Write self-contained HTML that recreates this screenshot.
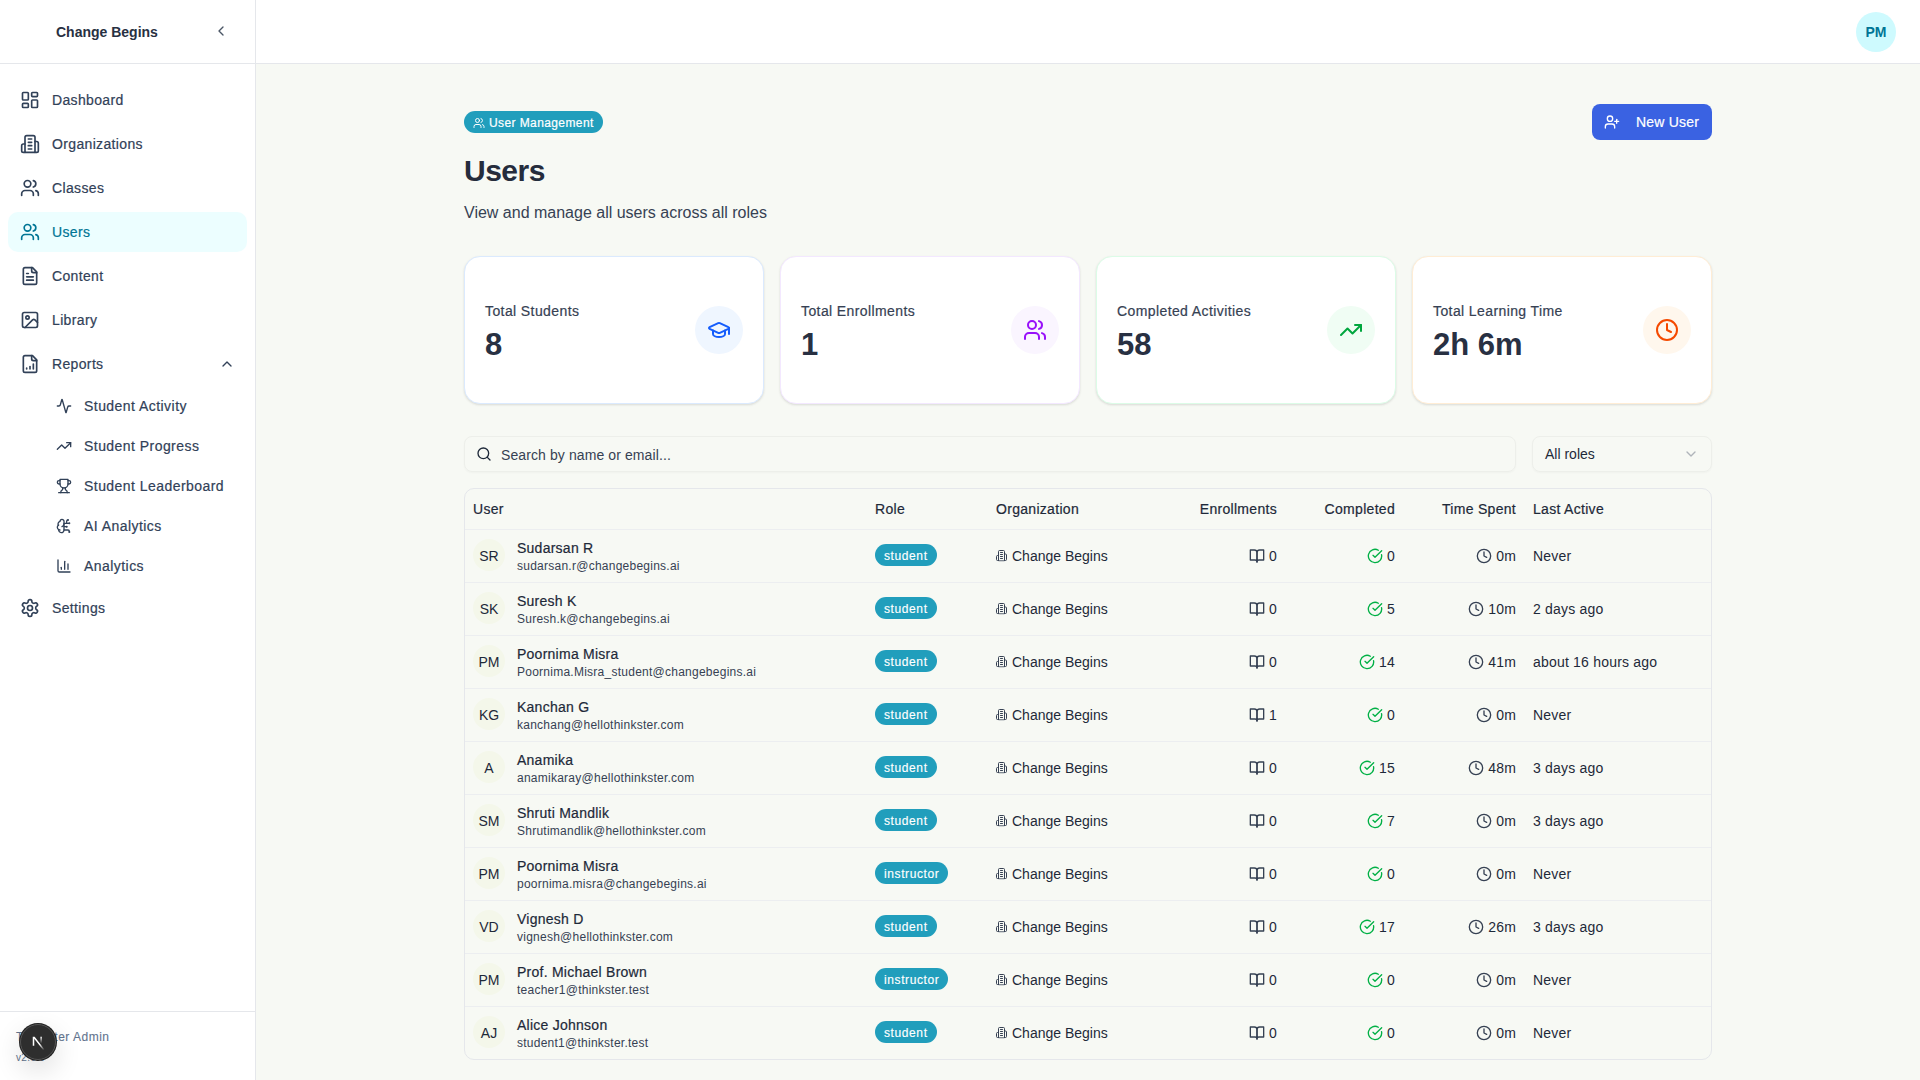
<!DOCTYPE html>
<html><head><meta charset="utf-8"><title>Users</title>
<style>
*{box-sizing:border-box;margin:0;padding:0}
html,body{width:1920px;height:1080px;overflow:hidden}
body{font-family:"Liberation Sans",sans-serif;background:#f7f9f4;color:#1e2939;position:relative}
.abs{position:absolute}
svg{display:block}
#sb{position:absolute;left:0;top:0;width:256px;height:1080px;background:#fff;border-right:1px solid #e5e7eb}
#sbh{position:absolute;left:0;top:0;width:255px;height:64px;border-bottom:1px solid #e5e7eb}
.nav{position:absolute;left:8px;width:239px;height:40px;border-radius:10px;display:flex;align-items:center;padding-left:12px;font-size:14px;color:#314158;letter-spacing:.35px;-webkit-text-stroke:.2px currentColor}
.nav .ic{width:20px;height:20px;margin-right:12px;flex:none}
.nav.act{background:#ecfeff;color:#007595}
.sub{position:absolute;left:44px;width:203px;height:36px;display:flex;align-items:center;padding-left:12px;font-size:14px;color:#314158;letter-spacing:.45px;-webkit-text-stroke:.2px currentColor}
.sub .ic{width:16px;height:16px;margin-right:12px;flex:none}
#hdr{position:absolute;left:256px;top:0;width:1664px;height:64px;background:#fff;border-bottom:1px solid #e5e7eb}
.card{position:absolute;top:256px;width:300px;height:148px;background:#fff;border:1px solid #dbeafe;border-radius:16px;box-shadow:0 1px 3px rgba(0,0,0,.08),0 1px 2px rgba(0,0,0,.05)}
.card .lbl{position:absolute;left:20px;top:44px;font-size:14px;line-height:20px;color:#364153;letter-spacing:.4px;-webkit-text-stroke:.2px currentColor}
.card .val{position:absolute;left:20px;top:70px;font-size:31px;line-height:36px;font-weight:700;color:#283042}
.card .circ{position:absolute;left:230px;top:49px;width:48px;height:48px;border-radius:50%;display:flex;align-items:center;justify-content:center}
.tbl{position:absolute;left:464px;top:488px;width:1248px;height:572px;border:1px solid #e5e7eb;border-radius:10px;overflow:hidden}
.th{position:absolute;top:0;height:41px;border-bottom:1px solid #eceef0;width:1246px;left:0}
.th span{position:absolute;top:10px;font-size:14px;line-height:20px;color:#1e2939;letter-spacing:.3px;-webkit-text-stroke:.2px currentColor}
.row{position:absolute;left:0;width:1246px;height:53px;border-bottom:1px solid #eceef0}
.row:last-child{border-bottom:none}
.av{position:absolute;left:8px;top:9px;width:32px;height:32px;border-radius:50%;background:#f3f6e9;display:flex;align-items:center;justify-content:center;font-size:14px;color:#1e2939;padding-top:1px;background:#f4f7ea}
.nm{position:absolute;left:52px;top:8px;font-size:14px;line-height:20px;color:#1e2939;letter-spacing:.25px;-webkit-text-stroke:.2px currentColor}
.em{position:absolute;left:52px;top:28px;font-size:12px;line-height:16px;color:#364153;letter-spacing:.25px}
.badge{position:absolute;left:410px;top:14px;height:22px;border-radius:11px;background:#219ebc;color:#fff;font-size:12px;line-height:24px;padding:0 9px 0 9px;letter-spacing:.6px;-webkit-text-stroke:.15px currentColor}
.org{position:absolute;left:531px;top:16px;display:flex;align-items:center;font-size:14px;line-height:20px;color:#1e2939}
.org svg{margin-right:4px;transform:translate(-.5px,-.5px)}
.num{position:absolute;top:16px;letter-spacing:.2px;display:flex;align-items:center;justify-content:flex-end;font-size:14px;line-height:20px;color:#1e2939}
.num svg{margin-right:4px}
.la{position:absolute;left:1068px;top:16px;letter-spacing:.2px;font-size:14px;line-height:20px;color:#1e2939}
</style></head><body>

<div id="sb"><div id="sbh"></div>
<div class="abs" style="left:56px;top:22px;font-size:14px;line-height:20px;font-weight:700;color:#283042">Change Begins</div>
<div class="abs" style="left:213px;top:23px"><svg width="16" height="16" viewBox="0 0 24 24" fill="none" stroke="#4a5565" stroke-width="2" stroke-linecap="round" stroke-linejoin="round" ><path d="m15 18-6-6 6-6"/></svg></div>
<div class="nav" style="top:80px"><span class="ic"><svg width="20" height="20" viewBox="0 0 24 24" fill="none" stroke="#314158" stroke-width="2" stroke-linecap="round" stroke-linejoin="round" ><rect width="7" height="9" x="3" y="3" rx="1"/><rect width="7" height="5" x="14" y="3" rx="1"/><rect width="7" height="9" x="14" y="12" rx="1"/><rect width="7" height="5" x="3" y="16" rx="1"/></svg></span>Dashboard</div>
<div class="nav" style="top:124px"><span class="ic"><svg width="20" height="20" viewBox="0 0 24 24" fill="none" stroke="#314158" stroke-width="2" stroke-linecap="round" stroke-linejoin="round" ><path d="M6 22V4a2 2 0 0 1 2-2h8a2 2 0 0 1 2 2v18Z"/><path d="M6 12H4a2 2 0 0 0-2 2v6a2 2 0 0 0 2 2h2"/><path d="M18 9h2a2 2 0 0 1 2 2v9a2 2 0 0 1-2 2h-2"/><path d="M10 6h4"/><path d="M10 10h4"/><path d="M10 14h4"/><path d="M10 18h4"/></svg></span>Organizations</div>
<div class="nav" style="top:168px"><span class="ic"><svg width="20" height="20" viewBox="0 0 24 24" fill="none" stroke="#314158" stroke-width="2" stroke-linecap="round" stroke-linejoin="round" ><path d="M16 21v-2a4 4 0 0 0-4-4H6a4 4 0 0 0-4 4v2"/><circle cx="9" cy="7" r="4"/><path d="M22 21v-2a4 4 0 0 0-3-3.87"/><path d="M16 3.13a4 4 0 0 1 0 7.75"/></svg></span>Classes</div>
<div class="nav act" style="top:212px"><span class="ic"><svg width="20" height="20" viewBox="0 0 24 24" fill="none" stroke="#007595" stroke-width="2" stroke-linecap="round" stroke-linejoin="round" ><path d="M16 21v-2a4 4 0 0 0-4-4H6a4 4 0 0 0-4 4v2"/><circle cx="9" cy="7" r="4"/><path d="M22 21v-2a4 4 0 0 0-3-3.87"/><path d="M16 3.13a4 4 0 0 1 0 7.75"/></svg></span>Users</div>
<div class="nav" style="top:256px"><span class="ic"><svg width="20" height="20" viewBox="0 0 24 24" fill="none" stroke="#314158" stroke-width="2" stroke-linecap="round" stroke-linejoin="round" ><path d="M15 2H6a2 2 0 0 0-2 2v16a2 2 0 0 0 2 2h12a2 2 0 0 0 2-2V7Z"/><path d="M14 2v4a2 2 0 0 0 2 2h4"/><path d="M10 9H8"/><path d="M16 13H8"/><path d="M16 17H8"/></svg></span>Content</div>
<div class="nav" style="top:300px"><span class="ic"><svg width="20" height="20" viewBox="0 0 24 24" fill="none" stroke="#314158" stroke-width="2" stroke-linecap="round" stroke-linejoin="round" ><rect width="18" height="18" x="3" y="3" rx="2" ry="2"/><circle cx="9" cy="9" r="2"/><path d="m21 15-3.086-3.086a2 2 0 0 0-2.828 0L6 21"/></svg></span>Library</div>
<div class="nav" style="top:344px"><span class="ic"><svg width="20" height="20" viewBox="0 0 24 24" fill="none" stroke="#314158" stroke-width="2" stroke-linecap="round" stroke-linejoin="round" ><path d="M15 2H6a2 2 0 0 0-2 2v16a2 2 0 0 0 2 2h12a2 2 0 0 0 2-2V7Z"/><path d="M14 2v4a2 2 0 0 0 2 2h4"/><path d="M8 18v-1"/><path d="M12 18v-3"/><path d="M16 18v-6"/></svg></span>Reports</div>
<div class="abs" style="left:219px;top:356px"><svg width="16" height="16" viewBox="0 0 24 24" fill="none" stroke="#314158" stroke-width="2" stroke-linecap="round" stroke-linejoin="round" ><path d="m18 15-6-6-6 6"/></svg></div>
<div class="sub" style="top:388px"><span class="ic"><svg width="16" height="16" viewBox="0 0 24 24" fill="none" stroke="#314158" stroke-width="2" stroke-linecap="round" stroke-linejoin="round" ><path d="M22 12h-2.48a2 2 0 0 0-1.93 1.46l-2.35 8.36a.25.25 0 0 1-.48 0L9.24 2.18a.25.25 0 0 0-.48 0l-2.35 8.36A2 2 0 0 1 4.49 12H2"/></svg></span>Student Activity</div>
<div class="sub" style="top:428px"><span class="ic"><svg width="16" height="16" viewBox="0 0 24 24" fill="none" stroke="#314158" stroke-width="2" stroke-linecap="round" stroke-linejoin="round" ><path d="M16 7h6v6"/><path d="m22 7-8.5 8.5-5-5L2 17"/></svg></span>Student Progress</div>
<div class="sub" style="top:468px"><span class="ic"><svg width="16" height="16" viewBox="0 0 24 24" fill="none" stroke="#314158" stroke-width="2" stroke-linecap="round" stroke-linejoin="round" ><path d="M6 9H4.5a2.5 2.5 0 0 1 0-5H6"/><path d="M18 9h1.5a2.5 2.5 0 0 0 0-5H18"/><path d="M4 22h16"/><path d="M10 14.66V17c0 .55-.47.98-.97 1.21C7.85 18.75 7 20.24 7 22"/><path d="M14 14.66V17c0 .55.47.98.97 1.21C16.15 18.75 17 20.24 17 22"/><path d="M18 2H6v7a6 6 0 0 0 12 0V2Z"/></svg></span>Student Leaderboard</div>
<div class="sub" style="top:508px"><span class="ic"><svg width="16" height="16" viewBox="0 0 24 24" fill="none" stroke="#314158" stroke-width="2" stroke-linecap="round" stroke-linejoin="round" ><path d="M12 5a3 3 0 1 0-5.997.125 4 4 0 0 0-2.526 5.77 4 4 0 0 0 .556 6.588A4 4 0 1 0 12 18Z"/><path d="M9 13a4.5 4.5 0 0 0 3-4"/><path d="M3.477 10.896a4 4 0 0 1 .585-.396"/><path d="M6 18a4 4 0 0 1-1.967-.516"/><path d="M12 13h4"/><path d="M12 18h6a2 2 0 0 1 2 2v1"/><path d="M12 8h8"/><path d="M16 8V5a2 2 0 0 1 2-2"/><circle cx="16" cy="13" r=".5"/><circle cx="18" cy="3" r=".5"/><circle cx="20" cy="21" r=".5"/><circle cx="20" cy="8" r=".5"/></svg></span>AI Analytics</div>
<div class="sub" style="top:548px"><span class="ic"><svg width="16" height="16" viewBox="0 0 24 24" fill="none" stroke="#314158" stroke-width="2" stroke-linecap="round" stroke-linejoin="round" ><path d="M3 3v16a2 2 0 0 0 2 2h16"/><path d="M18 17V9"/><path d="M13 17V5"/><path d="M8 17v-3"/></svg></span>Analytics</div>
<div class="nav" style="top:588px"><span class="ic"><svg width="20" height="20" viewBox="0 0 24 24" fill="none" stroke="#314158" stroke-width="2" stroke-linecap="round" stroke-linejoin="round" ><path d="M12.22 2h-.44a2 2 0 0 0-2 2v.18a2 2 0 0 1-1 1.73l-.43.25a2 2 0 0 1-2 0l-.15-.08a2 2 0 0 0-2.73.73l-.22.38a2 2 0 0 0 .73 2.73l.15.1a2 2 0 0 1 1 1.72v.51a2 2 0 0 1-1 1.74l-.15.09a2 2 0 0 0-.73 2.73l.22.38a2 2 0 0 0 2.73.73l.15-.08a2 2 0 0 1 2 0l.43.25a2 2 0 0 1 1 1.73V20a2 2 0 0 0 2 2h.44a2 2 0 0 0 2-2v-.18a2 2 0 0 1 1-1.73l.43-.25a2 2 0 0 1 2 0l.15.08a2 2 0 0 0 2.73-.73l.22-.39a2 2 0 0 0-.73-2.73l-.15-.08a2 2 0 0 1-1-1.74v-.5a2 2 0 0 1 1-1.74l.15-.09a2 2 0 0 0 .73-2.73l-.22-.38a2 2 0 0 0-2.73-.73l-.15.08a2 2 0 0 1-2 0l-.43-.25a2 2 0 0 1-1-1.73V4a2 2 0 0 0-2-2z"/><circle cx="12" cy="12" r="3"/></svg></span>Settings</div>
<div class="abs" style="left:0;top:1011px;width:255px;height:1px;background:#e5e7eb"></div>
<div class="abs" style="left:16px;top:1029px;font-size:12px;line-height:16px;color:#62748e;letter-spacing:.5px;-webkit-text-stroke:.1px currentColor">Thinkster Admin</div>
<div class="abs" style="left:16px;top:1051px;font-size:10px;line-height:14px;color:#62748e;letter-spacing:.3px">v2.0.0</div>
</div>
<div class="abs" style="left:20px;top:1024px;width:36px;height:36px;border-radius:50%;background:#2e2e2e;border:1px solid #555;box-shadow:0 0 0 1px #1f1f1f,0 10px 28px rgba(0,0,0,.14)"></div>
<svg class="abs" style="left:25.5px;top:1029.5px" width="22.5" height="22.5" viewBox="0 0 180 180"><path d="M149.508 157.52L69.142 54H54V125.97H66.1136V69.3836L139.999 164.845C143.333 162.614 146.509 160.165 149.508 157.52Z" fill="url(#ng1)"/><rect x="115" y="54" width="12" height="72" fill="url(#ng2)"/><defs><linearGradient id="ng1" x1="109" y1="116.5" x2="144.5" y2="160.5" gradientUnits="userSpaceOnUse"><stop stop-color="#fff"/><stop offset="1" stop-color="#fff" stop-opacity="0"/></linearGradient><linearGradient id="ng2" x1="121" y1="54" x2="120.799" y2="106.875" gradientUnits="userSpaceOnUse"><stop stop-color="#fff"/><stop offset="1" stop-color="#fff" stop-opacity="0"/></linearGradient></defs></svg>
<div id="hdr"></div>
<div class="abs" style="left:1856px;top:12px;width:40px;height:40px;border-radius:50%;background:#cefafe;color:#007595;font-size:14px;font-weight:700;display:flex;align-items:center;justify-content:center">PM</div>
<div class="abs" style="left:464px;top:111px;height:22px;border-radius:11px;background:#219ebc;color:#fff;font-size:12px;line-height:22px;padding:1px 9px 0 9px;display:flex;align-items:center;letter-spacing:.4px;-webkit-text-stroke:.2px currentColor"><span style="margin-right:4px"><svg width="12" height="12" viewBox="0 0 24 24" fill="none" stroke="#fff" stroke-width="2" stroke-linecap="round" stroke-linejoin="round" ><path d="M16 21v-2a4 4 0 0 0-4-4H6a4 4 0 0 0-4 4v2"/><circle cx="9" cy="7" r="4"/><path d="M22 21v-2a4 4 0 0 0-3-3.87"/><path d="M16 3.13a4 4 0 0 1 0 7.75"/></svg></span>User Management</div>
<div class="abs" style="left:464px;top:153px;font-size:30px;line-height:36px;font-weight:700;color:#252c3c;letter-spacing:-.5px">Users</div>
<div class="abs" style="left:464px;top:201px;font-size:16px;line-height:24px;color:#364153">View and manage all users across all roles</div>
<div class="abs" style="left:1592px;top:104px;width:120px;height:36px;border-radius:8px;background:#3a62e2;color:#fff;font-size:14px;letter-spacing:.2px;-webkit-text-stroke:.2px currentColor;display:flex;align-items:center;padding-left:12px"><span style="margin-right:16px"><svg width="16" height="16" viewBox="0 0 24 24" fill="none" stroke="#fff" stroke-width="2" stroke-linecap="round" stroke-linejoin="round" ><path d="M16 21v-2a4 4 0 0 0-4-4H6a4 4 0 0 0-4 4v2"/><circle cx="9" cy="7" r="4"/><line x1="19" x2="19" y1="8" y2="14"/><line x1="22" x2="16" y1="11" y2="11"/></svg></span>New User</div>
<div class="card" style="left:464px;border-color:#dbeafe"><div class="lbl">Total Students</div><div class="val">8</div><div class="circ" style="background:#eff6ff"><svg width="24" height="24" viewBox="0 0 24 24" fill="none" stroke="#155dfc" stroke-width="2" stroke-linecap="round" stroke-linejoin="round" ><path d="M21.42 10.922a1 1 0 0 0-.019-1.838L12.83 5.18a2 2 0 0 0-1.66 0L2.6 9.08a1 1 0 0 0 0 1.832l8.57 3.908a2 2 0 0 0 1.66 0z"/><path d="M22 10v6"/><path d="M6 12.5V16a6 3 0 0 0 12 0v-3.5"/></svg></div></div>
<div class="card" style="left:780px;border-color:#f3e8ff"><div class="lbl">Total Enrollments</div><div class="val">1</div><div class="circ" style="background:#faf5ff"><svg width="24" height="24" viewBox="0 0 24 24" fill="none" stroke="#9810fa" stroke-width="2" stroke-linecap="round" stroke-linejoin="round" ><path d="M16 21v-2a4 4 0 0 0-4-4H6a4 4 0 0 0-4 4v2"/><circle cx="9" cy="7" r="4"/><path d="M22 21v-2a4 4 0 0 0-3-3.87"/><path d="M16 3.13a4 4 0 0 1 0 7.75"/></svg></div></div>
<div class="card" style="left:1096px;border-color:#dcfce7"><div class="lbl">Completed Activities</div><div class="val">58</div><div class="circ" style="background:#f0fdf4"><svg width="24" height="24" viewBox="0 0 24 24" fill="none" stroke="#00a63e" stroke-width="2" stroke-linecap="round" stroke-linejoin="round" ><path d="M16 7h6v6"/><path d="m22 7-8.5 8.5-5-5L2 17"/></svg></div></div>
<div class="card" style="left:1412px;border-color:#ffedd5"><div class="lbl">Total Learning Time</div><div class="val">2h 6m</div><div class="circ" style="background:#fff7ed"><svg width="24" height="24" viewBox="0 0 24 24" fill="none" stroke="#f54900" stroke-width="2" stroke-linecap="round" stroke-linejoin="round" ><circle cx="12" cy="12" r="10"/><polyline points="12 6 12 12 16 14"/></svg></div></div>
<div class="abs" style="left:464px;top:436px;width:1052px;height:36px;border:1px solid #edefea;border-radius:8px;box-shadow:0 1px 2px rgba(0,0,0,.03)"></div>
<div class="abs" style="left:476px;top:446px"><svg width="16" height="16" viewBox="0 0 24 24" fill="none" stroke="#1e2939" stroke-width="2" stroke-linecap="round" stroke-linejoin="round" ><circle cx="11" cy="11" r="8"/><path d="m21 21-4.3-4.3"/></svg></div>
<div class="abs" style="left:501px;top:445px;font-size:14px;line-height:20px;color:#364153;letter-spacing:.1px">Search by name or email...</div>
<div class="abs" style="left:1532px;top:436px;width:180px;height:36px;border:1px solid #edefea;border-radius:8px;box-shadow:0 1px 2px rgba(0,0,0,.03)"></div>
<div class="abs" style="left:1545px;top:444px;font-size:14px;line-height:20px;color:#1e2939">All roles</div>
<div class="abs" style="left:1683px;top:446px;opacity:.5"><svg width="16" height="16" viewBox="0 0 24 24" fill="none" stroke="#6a7282" stroke-width="2" stroke-linecap="round" stroke-linejoin="round" ><path d="m6 9 6 6 6-6"/></svg></div>
<div class="tbl">
<div class="th"><span style="left:8px">User</span><span style="left:410px">Role</span><span style="left:531px">Organization</span><span style="right:434px">Enrollments</span><span style="right:316px">Completed</span><span style="right:195px">Time Spent</span><span style="left:1068px">Last Active</span></div>
<div class="row" style="top:41px"><div class="av">SR</div><div class="nm">Sudarsan R</div><div class="em">sudarsan.r@changebegins.ai</div><div class="badge">student</div><div class="org"><svg width="12" height="12" viewBox="0 0 24 24" fill="none" stroke="#364153" stroke-width="2" stroke-linecap="round" stroke-linejoin="round" ><path d="M6 22V4a2 2 0 0 1 2-2h8a2 2 0 0 1 2 2v18Z"/><path d="M6 12H4a2 2 0 0 0-2 2v6a2 2 0 0 0 2 2h2"/><path d="M18 9h2a2 2 0 0 1 2 2v9a2 2 0 0 1-2 2h-2"/><path d="M10 6h4"/><path d="M10 10h4"/><path d="M10 14h4"/><path d="M10 18h4"/></svg>Change Begins</div><div class="num" style="right:434px"><svg width="16" height="16" viewBox="0 0 24 24" fill="none" stroke="#364153" stroke-width="2" stroke-linecap="round" stroke-linejoin="round" ><path d="M2 3h6a4 4 0 0 1 4 4v14a3 3 0 0 0-3-3H2z"/><path d="M22 3h-6a4 4 0 0 0-4 4v14a3 3 0 0 1 3-3h7z"/></svg>0</div><div class="num" style="right:316px"><svg width="16" height="16" viewBox="0 0 24 24" fill="none" stroke="#00b045" stroke-width="2" stroke-linecap="round" stroke-linejoin="round" ><path d="M21.801 10A10 10 0 1 1 17 3.335"/><path d="m9 11 3 3L22 4"/></svg>0</div><div class="num" style="right:195px"><svg width="16" height="16" viewBox="0 0 24 24" fill="none" stroke="#364153" stroke-width="2" stroke-linecap="round" stroke-linejoin="round" ><circle cx="12" cy="12" r="10"/><polyline points="12 6 12 12 16 14"/></svg>0m</div><div class="la">Never</div></div>
<div class="row" style="top:94px"><div class="av">SK</div><div class="nm">Suresh K</div><div class="em">Suresh.k@changebegins.ai</div><div class="badge">student</div><div class="org"><svg width="12" height="12" viewBox="0 0 24 24" fill="none" stroke="#364153" stroke-width="2" stroke-linecap="round" stroke-linejoin="round" ><path d="M6 22V4a2 2 0 0 1 2-2h8a2 2 0 0 1 2 2v18Z"/><path d="M6 12H4a2 2 0 0 0-2 2v6a2 2 0 0 0 2 2h2"/><path d="M18 9h2a2 2 0 0 1 2 2v9a2 2 0 0 1-2 2h-2"/><path d="M10 6h4"/><path d="M10 10h4"/><path d="M10 14h4"/><path d="M10 18h4"/></svg>Change Begins</div><div class="num" style="right:434px"><svg width="16" height="16" viewBox="0 0 24 24" fill="none" stroke="#364153" stroke-width="2" stroke-linecap="round" stroke-linejoin="round" ><path d="M2 3h6a4 4 0 0 1 4 4v14a3 3 0 0 0-3-3H2z"/><path d="M22 3h-6a4 4 0 0 0-4 4v14a3 3 0 0 1 3-3h7z"/></svg>0</div><div class="num" style="right:316px"><svg width="16" height="16" viewBox="0 0 24 24" fill="none" stroke="#00b045" stroke-width="2" stroke-linecap="round" stroke-linejoin="round" ><path d="M21.801 10A10 10 0 1 1 17 3.335"/><path d="m9 11 3 3L22 4"/></svg>5</div><div class="num" style="right:195px"><svg width="16" height="16" viewBox="0 0 24 24" fill="none" stroke="#364153" stroke-width="2" stroke-linecap="round" stroke-linejoin="round" ><circle cx="12" cy="12" r="10"/><polyline points="12 6 12 12 16 14"/></svg>10m</div><div class="la">2 days ago</div></div>
<div class="row" style="top:147px"><div class="av">PM</div><div class="nm">Poornima Misra</div><div class="em">Poornima.Misra_student@changebegins.ai</div><div class="badge">student</div><div class="org"><svg width="12" height="12" viewBox="0 0 24 24" fill="none" stroke="#364153" stroke-width="2" stroke-linecap="round" stroke-linejoin="round" ><path d="M6 22V4a2 2 0 0 1 2-2h8a2 2 0 0 1 2 2v18Z"/><path d="M6 12H4a2 2 0 0 0-2 2v6a2 2 0 0 0 2 2h2"/><path d="M18 9h2a2 2 0 0 1 2 2v9a2 2 0 0 1-2 2h-2"/><path d="M10 6h4"/><path d="M10 10h4"/><path d="M10 14h4"/><path d="M10 18h4"/></svg>Change Begins</div><div class="num" style="right:434px"><svg width="16" height="16" viewBox="0 0 24 24" fill="none" stroke="#364153" stroke-width="2" stroke-linecap="round" stroke-linejoin="round" ><path d="M2 3h6a4 4 0 0 1 4 4v14a3 3 0 0 0-3-3H2z"/><path d="M22 3h-6a4 4 0 0 0-4 4v14a3 3 0 0 1 3-3h7z"/></svg>0</div><div class="num" style="right:316px"><svg width="16" height="16" viewBox="0 0 24 24" fill="none" stroke="#00b045" stroke-width="2" stroke-linecap="round" stroke-linejoin="round" ><path d="M21.801 10A10 10 0 1 1 17 3.335"/><path d="m9 11 3 3L22 4"/></svg>14</div><div class="num" style="right:195px"><svg width="16" height="16" viewBox="0 0 24 24" fill="none" stroke="#364153" stroke-width="2" stroke-linecap="round" stroke-linejoin="round" ><circle cx="12" cy="12" r="10"/><polyline points="12 6 12 12 16 14"/></svg>41m</div><div class="la">about 16 hours ago</div></div>
<div class="row" style="top:200px"><div class="av">KG</div><div class="nm">Kanchan G</div><div class="em">kanchang@hellothinkster.com</div><div class="badge">student</div><div class="org"><svg width="12" height="12" viewBox="0 0 24 24" fill="none" stroke="#364153" stroke-width="2" stroke-linecap="round" stroke-linejoin="round" ><path d="M6 22V4a2 2 0 0 1 2-2h8a2 2 0 0 1 2 2v18Z"/><path d="M6 12H4a2 2 0 0 0-2 2v6a2 2 0 0 0 2 2h2"/><path d="M18 9h2a2 2 0 0 1 2 2v9a2 2 0 0 1-2 2h-2"/><path d="M10 6h4"/><path d="M10 10h4"/><path d="M10 14h4"/><path d="M10 18h4"/></svg>Change Begins</div><div class="num" style="right:434px"><svg width="16" height="16" viewBox="0 0 24 24" fill="none" stroke="#364153" stroke-width="2" stroke-linecap="round" stroke-linejoin="round" ><path d="M2 3h6a4 4 0 0 1 4 4v14a3 3 0 0 0-3-3H2z"/><path d="M22 3h-6a4 4 0 0 0-4 4v14a3 3 0 0 1 3-3h7z"/></svg>1</div><div class="num" style="right:316px"><svg width="16" height="16" viewBox="0 0 24 24" fill="none" stroke="#00b045" stroke-width="2" stroke-linecap="round" stroke-linejoin="round" ><path d="M21.801 10A10 10 0 1 1 17 3.335"/><path d="m9 11 3 3L22 4"/></svg>0</div><div class="num" style="right:195px"><svg width="16" height="16" viewBox="0 0 24 24" fill="none" stroke="#364153" stroke-width="2" stroke-linecap="round" stroke-linejoin="round" ><circle cx="12" cy="12" r="10"/><polyline points="12 6 12 12 16 14"/></svg>0m</div><div class="la">Never</div></div>
<div class="row" style="top:253px"><div class="av">A</div><div class="nm">Anamika</div><div class="em">anamikaray@hellothinkster.com</div><div class="badge">student</div><div class="org"><svg width="12" height="12" viewBox="0 0 24 24" fill="none" stroke="#364153" stroke-width="2" stroke-linecap="round" stroke-linejoin="round" ><path d="M6 22V4a2 2 0 0 1 2-2h8a2 2 0 0 1 2 2v18Z"/><path d="M6 12H4a2 2 0 0 0-2 2v6a2 2 0 0 0 2 2h2"/><path d="M18 9h2a2 2 0 0 1 2 2v9a2 2 0 0 1-2 2h-2"/><path d="M10 6h4"/><path d="M10 10h4"/><path d="M10 14h4"/><path d="M10 18h4"/></svg>Change Begins</div><div class="num" style="right:434px"><svg width="16" height="16" viewBox="0 0 24 24" fill="none" stroke="#364153" stroke-width="2" stroke-linecap="round" stroke-linejoin="round" ><path d="M2 3h6a4 4 0 0 1 4 4v14a3 3 0 0 0-3-3H2z"/><path d="M22 3h-6a4 4 0 0 0-4 4v14a3 3 0 0 1 3-3h7z"/></svg>0</div><div class="num" style="right:316px"><svg width="16" height="16" viewBox="0 0 24 24" fill="none" stroke="#00b045" stroke-width="2" stroke-linecap="round" stroke-linejoin="round" ><path d="M21.801 10A10 10 0 1 1 17 3.335"/><path d="m9 11 3 3L22 4"/></svg>15</div><div class="num" style="right:195px"><svg width="16" height="16" viewBox="0 0 24 24" fill="none" stroke="#364153" stroke-width="2" stroke-linecap="round" stroke-linejoin="round" ><circle cx="12" cy="12" r="10"/><polyline points="12 6 12 12 16 14"/></svg>48m</div><div class="la">3 days ago</div></div>
<div class="row" style="top:306px"><div class="av">SM</div><div class="nm">Shruti Mandlik</div><div class="em">Shrutimandlik@hellothinkster.com</div><div class="badge">student</div><div class="org"><svg width="12" height="12" viewBox="0 0 24 24" fill="none" stroke="#364153" stroke-width="2" stroke-linecap="round" stroke-linejoin="round" ><path d="M6 22V4a2 2 0 0 1 2-2h8a2 2 0 0 1 2 2v18Z"/><path d="M6 12H4a2 2 0 0 0-2 2v6a2 2 0 0 0 2 2h2"/><path d="M18 9h2a2 2 0 0 1 2 2v9a2 2 0 0 1-2 2h-2"/><path d="M10 6h4"/><path d="M10 10h4"/><path d="M10 14h4"/><path d="M10 18h4"/></svg>Change Begins</div><div class="num" style="right:434px"><svg width="16" height="16" viewBox="0 0 24 24" fill="none" stroke="#364153" stroke-width="2" stroke-linecap="round" stroke-linejoin="round" ><path d="M2 3h6a4 4 0 0 1 4 4v14a3 3 0 0 0-3-3H2z"/><path d="M22 3h-6a4 4 0 0 0-4 4v14a3 3 0 0 1 3-3h7z"/></svg>0</div><div class="num" style="right:316px"><svg width="16" height="16" viewBox="0 0 24 24" fill="none" stroke="#00b045" stroke-width="2" stroke-linecap="round" stroke-linejoin="round" ><path d="M21.801 10A10 10 0 1 1 17 3.335"/><path d="m9 11 3 3L22 4"/></svg>7</div><div class="num" style="right:195px"><svg width="16" height="16" viewBox="0 0 24 24" fill="none" stroke="#364153" stroke-width="2" stroke-linecap="round" stroke-linejoin="round" ><circle cx="12" cy="12" r="10"/><polyline points="12 6 12 12 16 14"/></svg>0m</div><div class="la">3 days ago</div></div>
<div class="row" style="top:359px"><div class="av">PM</div><div class="nm">Poornima Misra</div><div class="em">poornima.misra@changebegins.ai</div><div class="badge">instructor</div><div class="org"><svg width="12" height="12" viewBox="0 0 24 24" fill="none" stroke="#364153" stroke-width="2" stroke-linecap="round" stroke-linejoin="round" ><path d="M6 22V4a2 2 0 0 1 2-2h8a2 2 0 0 1 2 2v18Z"/><path d="M6 12H4a2 2 0 0 0-2 2v6a2 2 0 0 0 2 2h2"/><path d="M18 9h2a2 2 0 0 1 2 2v9a2 2 0 0 1-2 2h-2"/><path d="M10 6h4"/><path d="M10 10h4"/><path d="M10 14h4"/><path d="M10 18h4"/></svg>Change Begins</div><div class="num" style="right:434px"><svg width="16" height="16" viewBox="0 0 24 24" fill="none" stroke="#364153" stroke-width="2" stroke-linecap="round" stroke-linejoin="round" ><path d="M2 3h6a4 4 0 0 1 4 4v14a3 3 0 0 0-3-3H2z"/><path d="M22 3h-6a4 4 0 0 0-4 4v14a3 3 0 0 1 3-3h7z"/></svg>0</div><div class="num" style="right:316px"><svg width="16" height="16" viewBox="0 0 24 24" fill="none" stroke="#00b045" stroke-width="2" stroke-linecap="round" stroke-linejoin="round" ><path d="M21.801 10A10 10 0 1 1 17 3.335"/><path d="m9 11 3 3L22 4"/></svg>0</div><div class="num" style="right:195px"><svg width="16" height="16" viewBox="0 0 24 24" fill="none" stroke="#364153" stroke-width="2" stroke-linecap="round" stroke-linejoin="round" ><circle cx="12" cy="12" r="10"/><polyline points="12 6 12 12 16 14"/></svg>0m</div><div class="la">Never</div></div>
<div class="row" style="top:412px"><div class="av">VD</div><div class="nm">Vignesh D</div><div class="em">vignesh@hellothinkster.com</div><div class="badge">student</div><div class="org"><svg width="12" height="12" viewBox="0 0 24 24" fill="none" stroke="#364153" stroke-width="2" stroke-linecap="round" stroke-linejoin="round" ><path d="M6 22V4a2 2 0 0 1 2-2h8a2 2 0 0 1 2 2v18Z"/><path d="M6 12H4a2 2 0 0 0-2 2v6a2 2 0 0 0 2 2h2"/><path d="M18 9h2a2 2 0 0 1 2 2v9a2 2 0 0 1-2 2h-2"/><path d="M10 6h4"/><path d="M10 10h4"/><path d="M10 14h4"/><path d="M10 18h4"/></svg>Change Begins</div><div class="num" style="right:434px"><svg width="16" height="16" viewBox="0 0 24 24" fill="none" stroke="#364153" stroke-width="2" stroke-linecap="round" stroke-linejoin="round" ><path d="M2 3h6a4 4 0 0 1 4 4v14a3 3 0 0 0-3-3H2z"/><path d="M22 3h-6a4 4 0 0 0-4 4v14a3 3 0 0 1 3-3h7z"/></svg>0</div><div class="num" style="right:316px"><svg width="16" height="16" viewBox="0 0 24 24" fill="none" stroke="#00b045" stroke-width="2" stroke-linecap="round" stroke-linejoin="round" ><path d="M21.801 10A10 10 0 1 1 17 3.335"/><path d="m9 11 3 3L22 4"/></svg>17</div><div class="num" style="right:195px"><svg width="16" height="16" viewBox="0 0 24 24" fill="none" stroke="#364153" stroke-width="2" stroke-linecap="round" stroke-linejoin="round" ><circle cx="12" cy="12" r="10"/><polyline points="12 6 12 12 16 14"/></svg>26m</div><div class="la">3 days ago</div></div>
<div class="row" style="top:465px"><div class="av">PM</div><div class="nm">Prof. Michael Brown</div><div class="em">teacher1@thinkster.test</div><div class="badge">instructor</div><div class="org"><svg width="12" height="12" viewBox="0 0 24 24" fill="none" stroke="#364153" stroke-width="2" stroke-linecap="round" stroke-linejoin="round" ><path d="M6 22V4a2 2 0 0 1 2-2h8a2 2 0 0 1 2 2v18Z"/><path d="M6 12H4a2 2 0 0 0-2 2v6a2 2 0 0 0 2 2h2"/><path d="M18 9h2a2 2 0 0 1 2 2v9a2 2 0 0 1-2 2h-2"/><path d="M10 6h4"/><path d="M10 10h4"/><path d="M10 14h4"/><path d="M10 18h4"/></svg>Change Begins</div><div class="num" style="right:434px"><svg width="16" height="16" viewBox="0 0 24 24" fill="none" stroke="#364153" stroke-width="2" stroke-linecap="round" stroke-linejoin="round" ><path d="M2 3h6a4 4 0 0 1 4 4v14a3 3 0 0 0-3-3H2z"/><path d="M22 3h-6a4 4 0 0 0-4 4v14a3 3 0 0 1 3-3h7z"/></svg>0</div><div class="num" style="right:316px"><svg width="16" height="16" viewBox="0 0 24 24" fill="none" stroke="#00b045" stroke-width="2" stroke-linecap="round" stroke-linejoin="round" ><path d="M21.801 10A10 10 0 1 1 17 3.335"/><path d="m9 11 3 3L22 4"/></svg>0</div><div class="num" style="right:195px"><svg width="16" height="16" viewBox="0 0 24 24" fill="none" stroke="#364153" stroke-width="2" stroke-linecap="round" stroke-linejoin="round" ><circle cx="12" cy="12" r="10"/><polyline points="12 6 12 12 16 14"/></svg>0m</div><div class="la">Never</div></div>
<div class="row" style="top:518px"><div class="av">AJ</div><div class="nm">Alice Johnson</div><div class="em">student1@thinkster.test</div><div class="badge">student</div><div class="org"><svg width="12" height="12" viewBox="0 0 24 24" fill="none" stroke="#364153" stroke-width="2" stroke-linecap="round" stroke-linejoin="round" ><path d="M6 22V4a2 2 0 0 1 2-2h8a2 2 0 0 1 2 2v18Z"/><path d="M6 12H4a2 2 0 0 0-2 2v6a2 2 0 0 0 2 2h2"/><path d="M18 9h2a2 2 0 0 1 2 2v9a2 2 0 0 1-2 2h-2"/><path d="M10 6h4"/><path d="M10 10h4"/><path d="M10 14h4"/><path d="M10 18h4"/></svg>Change Begins</div><div class="num" style="right:434px"><svg width="16" height="16" viewBox="0 0 24 24" fill="none" stroke="#364153" stroke-width="2" stroke-linecap="round" stroke-linejoin="round" ><path d="M2 3h6a4 4 0 0 1 4 4v14a3 3 0 0 0-3-3H2z"/><path d="M22 3h-6a4 4 0 0 0-4 4v14a3 3 0 0 1 3-3h7z"/></svg>0</div><div class="num" style="right:316px"><svg width="16" height="16" viewBox="0 0 24 24" fill="none" stroke="#00b045" stroke-width="2" stroke-linecap="round" stroke-linejoin="round" ><path d="M21.801 10A10 10 0 1 1 17 3.335"/><path d="m9 11 3 3L22 4"/></svg>0</div><div class="num" style="right:195px"><svg width="16" height="16" viewBox="0 0 24 24" fill="none" stroke="#364153" stroke-width="2" stroke-linecap="round" stroke-linejoin="round" ><circle cx="12" cy="12" r="10"/><polyline points="12 6 12 12 16 14"/></svg>0m</div><div class="la">Never</div></div>
</div>
</body></html>
